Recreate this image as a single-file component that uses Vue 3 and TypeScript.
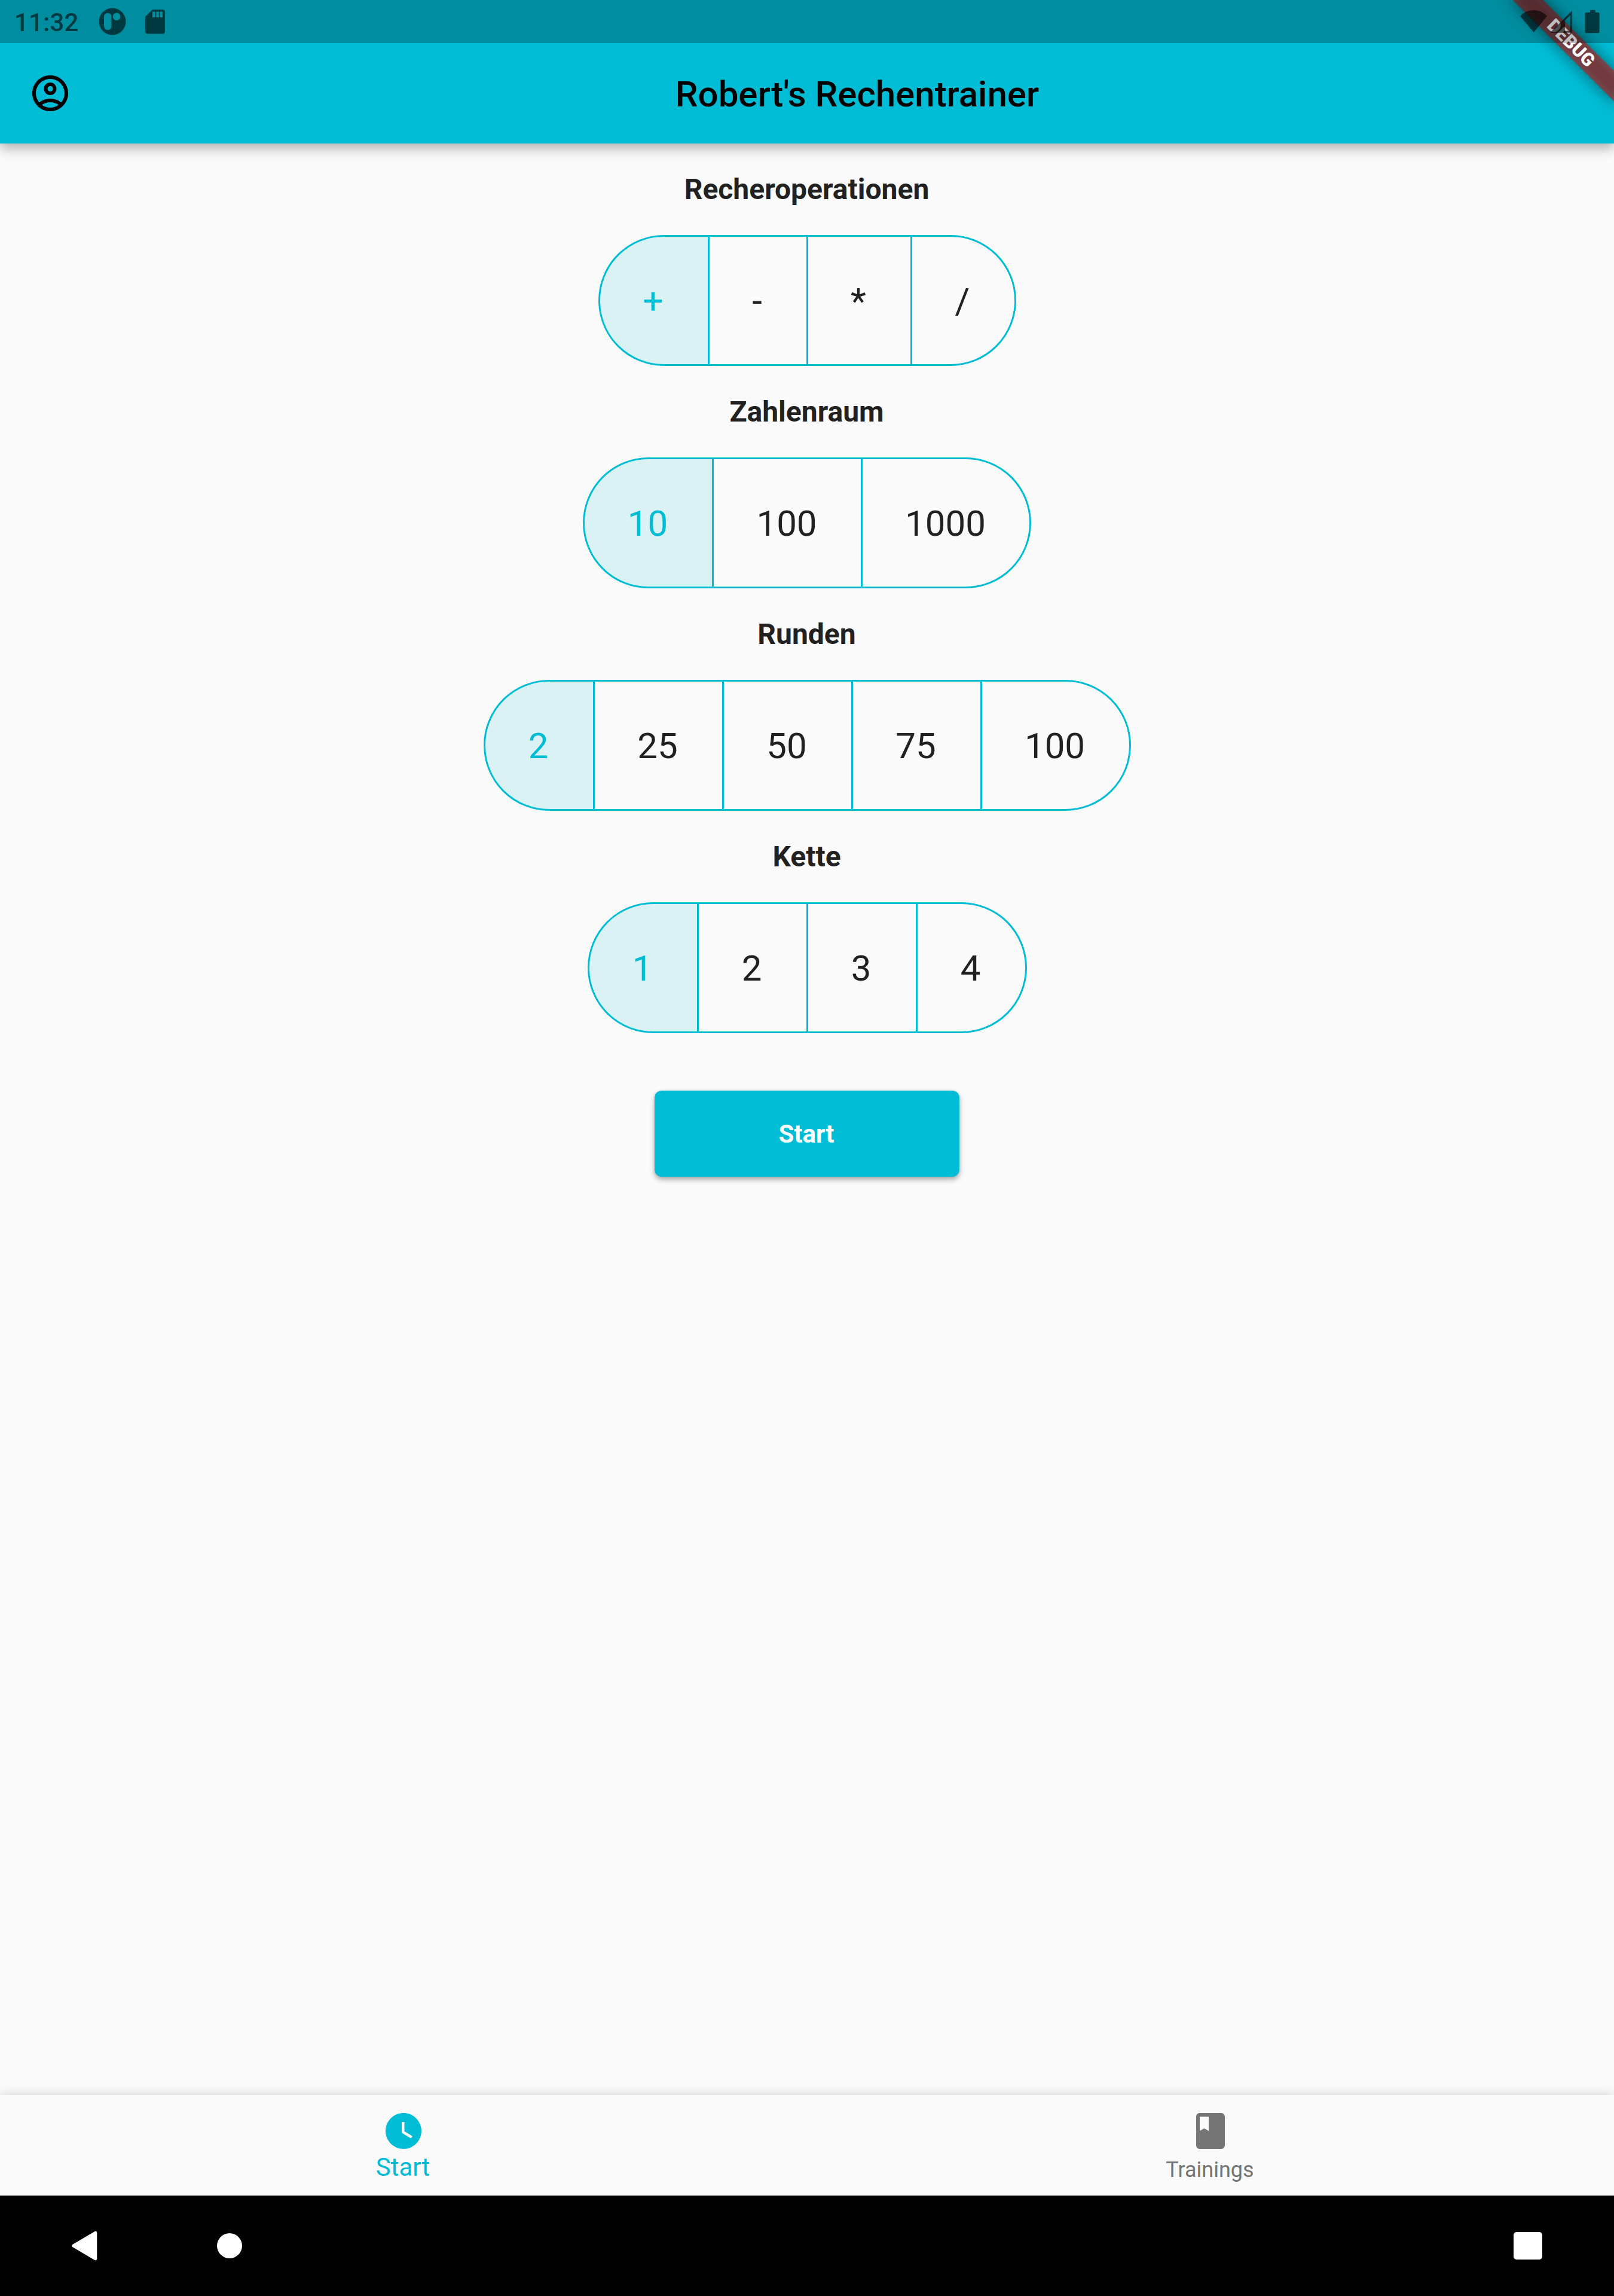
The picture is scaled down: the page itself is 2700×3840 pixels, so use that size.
<script setup lang="ts">
import { ref } from 'vue'

interface Option {
  label: string
  width: number
}

interface Group {
  title: string
  options: Option[]
  selected: number
}

const groups = ref<Group[]>([
  {
    title: 'Recheroperationen',
    selected: 0,
    options: [
      { label: '+', width: 180 },
      { label: '-', width: 162 },
      { label: '*', width: 171 },
      { label: '/', width: 171 },
    ],
  },
  {
    title: 'Zahlenraum',
    selected: 0,
    options: [
      { label: '10', width: 213 },
      { label: '100', width: 246 },
      { label: '1000', width: 279 },
    ],
  },
  {
    title: 'Runden',
    selected: 0,
    options: [
      { label: '2', width: 180 },
      { label: '25', width: 213 },
      { label: '50', width: 213 },
      { label: '75', width: 213 },
      { label: '100', width: 246 },
    ],
  },
  {
    title: 'Kette',
    selected: 0,
    options: [
      { label: '1', width: 180 },
      { label: '2', width: 180 },
      { label: '3', width: 180 },
      { label: '4', width: 180 },
    ],
  },
])
</script>

<template>
  <div class="screen">
    <header class="top">
      <div class="status">
        <span class="time">11:32</span>
        <svg class="s-app" width="46" height="46" viewBox="0 0 46 46">
          <path
            fill-rule="evenodd"
            d="M23 .5a22.5 22.5 0 1 0 0 45a22.5 22.5 0 1 0 0-45zM15.2 8.7a6.2 6.2 0 0 1 6.2 6.2v16.2a6.2 6.2 0 0 1-12.4 0V14.9a6.2 6.2 0 0 1 6.2-6.2zM30 8.5a6.3 6.3 0 1 1 0 12.6a6.3 6.3 0 1 1 0-12.6z"
          />
        </svg>
        <svg class="s-sd" width="33" height="41" viewBox="0 0 33 41">
          <path
            fill-rule="evenodd"
            d="M12 0h17a4 4 0 0 1 4 4v32.500a4 4 0 0 1-4 4H4a4 4 0 0 1-4-4V12zM12 3.500v9.500h4.700V3.500zM18.200 3.500v9.500h4.700V3.500zM24.300 3.500v9.500h4.700V3.500z"
          />
        </svg>
        <span class="spacer"></span>
        <svg class="s-right" width="133" height="42" viewBox="0 0 133 42">
          <path d="M22.700 38L0 11Q9 1 22.500 1T45 11z" />
          <path fill-rule="evenodd" d="M50 38.800L86.700 2v36.800zM75 18.200v17.600h8.700V9.500z" />
          <path d="M117.500 .700h8.600v4h4.900a2 2 0 0 1 2 2v30.600a2 2 0 0 1-2 2h-20.200a2 2 0 0 1-2-2V6.700a2 2 0 0 1 2-2h6.700z" transform="translate(-.4 0)" />
        </svg>
      </div>
      <div class="ribbon"><span>DEBUG</span></div>
      <div class="appbar">
        <svg class="account" width="72" height="72" viewBox="0 0 24 24">
          <path
            d="M12 2C6.480 2 2 6.480 2 12s4.480 10 10 10 10-4.480 10-10S17.520 2 12 2zM7.350 18.500C8.660 17.560 10.260 17 12 17s3.340.56 4.650 1.500C15.340 19.440 13.740 20 12 20s-3.340-.56-4.650-1.500zm10.790-1.380C16.450 15.800 14.320 15 12 15s-4.450.8-6.140 2.120C4.700 15.730 4 13.950 4 12c0-4.420 3.580-8 8-8s8 3.580 8 8c0 1.950-.7 3.730-1.860 5.120zM12 6c-1.930 0-3.500 1.570-3.500 3.500S10.070 13 12 13s3.500-1.570 3.500-3.500S13.930 6 12 6zm0 5c-.83 0-1.500-.67-1.500-1.500S11.170 8 12 8s1.500.67 1.500 1.500S12.830 11 12 11z"
          />
        </svg>
        <h1 class="title">Robert's Rechentrainer</h1>
      </div>
    </header>

    <main class="content">
      <section v-for="group in groups" :key="group.title" class="group">
        <h2 class="heading">{{ group.title }}</h2>
        <div class="toggle">
          <button
            v-for="(option, index) in group.options"
            :key="option.label"
            class="option"
            :class="{ selected: index === group.selected }"
            :style="{ width: option.width + 'px' }"
            @click="group.selected = index"
          >
            {{ option.label }}
          </button>
        </div>
      </section>
      <button class="start">Start</button>
    </main>

    <nav class="tabs">
      <div class="tab active">
        <svg width="72" height="72" viewBox="0 0 24 24">
          <path
            d="M12 2C6.500 2 2 6.500 2 12s4.500 10 10 10 10-4.500 10-10S17.500 2 12 2zm4.200 14.200L11 13V7h1.500v5.200l4.500 2.700-.8 1.300z"
          />
        </svg>
        <span class="tab-label">Start</span>
      </div>
      <div class="tab">
        <svg width="72" height="72" viewBox="0 0 24 24">
          <path
            d="M18 2H6c-1.100 0-2 .9-2 2v16c0 1.100.9 2 2 2h12c1.100 0 2-.9 2-2V4c0-1.100-.9-2-2-2zM6 4h5v8l-2.500-1.500L6 12V4z"
          />
        </svg>
        <span class="tab-label">Trainings</span>
      </div>
    </nav>

    <footer class="system">
      <svg class="back" width="43" height="50" viewBox="0 0 43 50">
        <path
          d="M3 25L39.500 3.500V46.500z"
          fill="#fff"
          stroke="#fff"
          stroke-width="5.500"
          stroke-linejoin="round"
        />
      </svg>
      <span class="home"></span>
      <span class="spacer"></span>
      <span class="recent"></span>
    </footer>
  </div>
</template>

<style>
body {
  margin: 0;
  background: #fafafa;
}
</style>

<style scoped>
.screen {
  width: 2700px;
  height: 3840px;
  display: flex;
  flex-direction: column;
  overflow: hidden;
  background: #fafafa;
  color: #212121;
  font-family: Roboto, sans-serif;
}

svg {
  display: block;
  fill: currentColor;
}

button {
  margin: 0;
  padding: 0;
  border: 0;
  background: none;
  color: inherit;
  font: inherit;
}

.spacer {
  flex: 1;
}

.top {
  position: relative;
  height: 240px;
  background: #00bcd4;
  box-shadow: 0 9px 18px rgba(0, 0, 0, 0.28);
}

.status {
  position: relative;
  z-index: 2;
  box-sizing: border-box;
  height: 72px;
  padding: 0 24px 0 24px;
  display: flex;
  align-items: flex-start;
  background: rgba(0, 0, 0, 0.25);
  color: rgba(0, 0, 0, 0.6);
}

.time {
  width: 141px;
  margin-top: 13px;
  font-size: 42px;
  font-weight: 500;
  line-height: 49px;
  letter-spacing: 0.2px;
}

.s-app {
  margin-top: 13px;
}

.s-sd {
  margin: 16px 0 0 32px;
}

.s-right {
  margin-top: 16px;
}

.ribbon {
  position: absolute;
  z-index: 1;
  left: 2508px;
  top: 54px;
  width: 240px;
  height: 36px;
  transform: rotate(45deg);
}

.ribbon::before {
  content: '';
  position: absolute;
  inset: 0;
  background: rgba(0, 0, 0, 0.5);
  filter: blur(12px);
}

.ribbon span {
  position: absolute;
  inset: 0;
  background: rgba(183, 28, 28, 0.627);
  color: #fff;
  font-size: 30.6px;
  font-weight: 900;
  line-height: 36px;
  text-align: center;
}

.appbar {
  height: 168px;
  display: grid;
  grid-template-columns: 168px 1fr;
  align-items: center;
  color: #000;
}

.account {
  margin-left: 48px;
}

.title {
  margin: 0;
  padding-top: 3px;
  font-size: 60px;
  font-weight: 500;
  line-height: 70px;
  text-align: center;
  white-space: nowrap;
}

.content {
  flex: 1;
  display: flex;
  flex-direction: column;
  align-items: center;
}

.group {
  height: 372px;
  display: flex;
  flex-direction: column;
  align-items: center;
}

.heading {
  margin: 48px 0;
  padding-right: 1px;
  font-size: 48px;
  font-weight: 700;
  line-height: 57px;
}

.toggle {
  box-sizing: border-box;
  height: 219px;
  display: flex;
  overflow: hidden;
  border: 3px solid #00bcd4;
  border-radius: 110px;
}

.option {
  box-sizing: content-box;
  height: 211px;
  padding-top: 2px;
  font-size: 60px;
  line-height: 211px;
  text-align: center;
  text-indent: -2px;
}

.option + .option {
  border-left: 3px solid #00bcd4;
}

.option.selected {
  background: rgba(0, 188, 212, 0.12);
  color: #00bcd4;
}

.start {
  width: 510px;
  height: 144px;
  margin-top: 96px;
  border-radius: 12px;
  background: #00bcd4;
  box-shadow: 0 5px 8px rgba(0, 0, 0, 0.3), 0 1px 6px rgba(0, 0, 0, 0.06);
  color: #fff;
  font-size: 42px;
  font-weight: 700;
  text-indent: -2px;
}

.tabs {
  height: 168px;
  display: grid;
  grid-template-columns: 1fr 1fr;
  background: #fafafa;
  box-shadow: 0 -3px 15px rgba(0, 0, 0, 0.13);
}

.tab {
  padding-top: 24px;
  display: flex;
  flex-direction: column;
  align-items: center;
  color: #757575;
}

.tab-label {
  margin-top: 8px;
  padding-right: 2px;
  font-size: 36px;
  line-height: 42px;
}

.tab.active {
  color: #00bcd4;
}

.tab.active .tab-label {
  margin-top: 0;
  font-size: 42px;
  line-height: 49px;
}

.system {
  position: relative;
  box-sizing: border-box;
  height: 168px;
  padding: 0 120px;
  display: flex;
  align-items: center;
  background: #000;
}

.home {
  width: 42px;
  height: 42px;
  margin-left: 200px;
  border-radius: 50%;
  background: #fff;
}

.recent {
  width: 48px;
  height: 46px;
  border-radius: 5px;
  background: #fff;
}
</style>
